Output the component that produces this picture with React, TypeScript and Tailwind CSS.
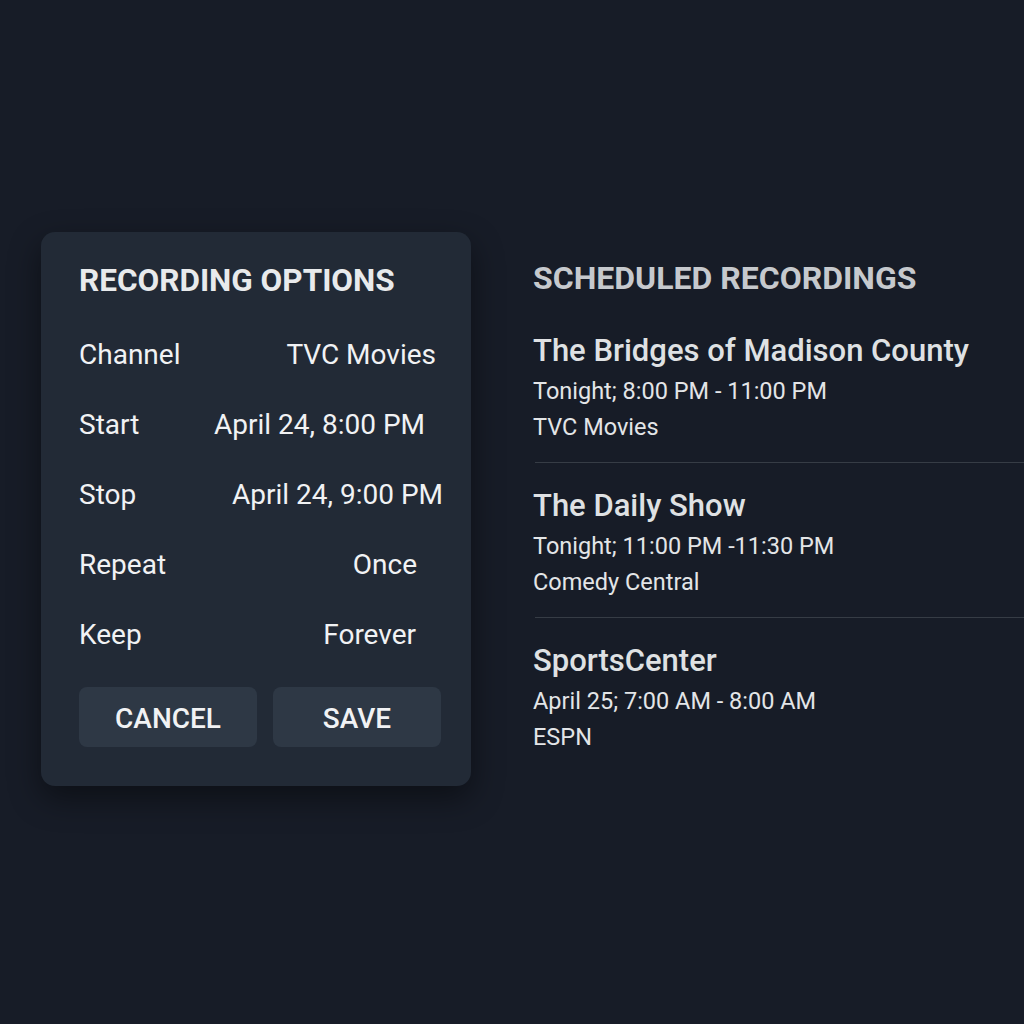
import React from "react";

const options = [
  { label: "Channel", value: "TVC Movies", pad: "pr-[7px]" },
  { label: "Start", value: "April 24, 8:00 PM", pad: "pr-[18px]" },
  { label: "Stop", value: "April 24, 9:00 PM", pad: "pr-0" },
  { label: "Repeat", value: "Once", pad: "pr-[26px]" },
  { label: "Keep", value: "Forever", pad: "pr-[27px]" },
];

const recordings = [
  { title: "The Bridges of Madison County", time: "Tonight; 8:00 PM - 11:00 PM", channel: "TVC Movies" },
  { title: "The Daily Show", time: "Tonight; 11:00 PM -11:30 PM", channel: "Comedy Central" },
  { title: "SportsCenter", time: "April 25; 7:00 AM - 8:00 AM", channel: "ESPN" },
];

const RecordingOptions = () => (
  <div className="w-[430px] shrink-0 rounded-[14px] bg-[#222a36] pl-[38px] pr-[28px] pt-[31px] pb-[39px] shadow-[0_12px_32px_rgba(0,0,0,0.45)]">
    <h2 className="h-[36px] text-[31.5px] leading-[36px] font-bold text-[#e8eaec]">RECORDING OPTIONS</h2>
    <div className="mt-[21px] flex flex-col">
      {options.map((o) => (
        <div key={o.label} className="flex h-[70px] items-center justify-between text-[28px] text-[#f1f2f4]">
          <span>{o.label}</span>
          <span className={o.pad}>{o.value}</span>
        </div>
      ))}
    </div>
    <div className="mt-[17px] flex gap-[16px]">
      <button className="h-[60px] w-[178px] rounded-[8px] bg-[#2e3845] pt-[3px] text-[28px] font-medium text-[#f1f2f4]">CANCEL</button>
      <button className="h-[60px] w-[168px] rounded-[8px] bg-[#2e3845] pt-[3px] text-[28px] font-medium text-[#f1f2f4]">SAVE</button>
    </div>
  </div>
);

const ScheduledRecordings = () => (
  <div className="flex-1 pt-[28px]">
    <h2 className="h-[36px] text-[32px] leading-[36px] font-bold text-[#c6c9cd]">SCHEDULED RECORDINGS</h2>
    <div className="mt-[37px] flex flex-col">
      {recordings.map((r, i) => (
        <div key={r.title}>
          {i > 0 && <div className="ml-[2px] mt-[17px] mb-[25px] h-px bg-[#363c45]" />}
          <div className="h-[36px] text-[31px] leading-[36px] font-medium text-[#dfe1e3]">{r.title}</div>
          <div className="mt-[4px] h-[36px] text-[23.5px] leading-[36px] text-[#e3e5e7]">{r.time}</div>
          <div className="h-[36px] text-[23.5px] leading-[36px] text-[#e3e5e7]">{r.channel}</div>
        </div>
      ))}
    </div>
  </div>
);

export default function App() {
  return (
    <div className="flex min-h-[1024px] w-full items-start gap-[62px] bg-[#171c27] pl-[41px] pt-[232px] font-['Roboto',sans-serif]">
      <RecordingOptions />
      <ScheduledRecordings />
    </div>
  );
}
